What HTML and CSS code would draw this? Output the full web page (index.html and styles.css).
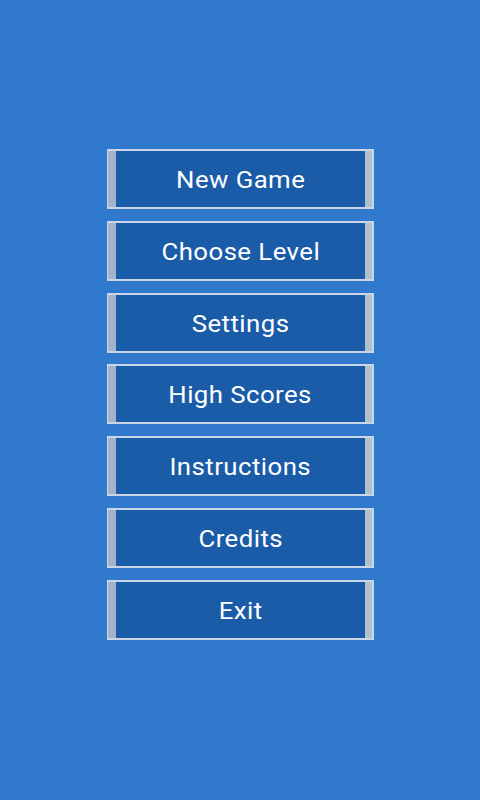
FILE: index.html
```html
<!DOCTYPE html>
<html lang="en">
<head>
    <meta charset="UTF-8">
    <meta name="viewport" content="width=device-width, initial-scale=1.0">
    <title>Main Menu</title>
    <link rel="stylesheet" href="styles.css">
</head>
<body>
    <div class="menu">
        <button class="menu-btn"><span class="label">New Game</span></button>
        <button class="menu-btn"><span class="label">Choose Level</span></button>
        <button class="menu-btn"><span class="label">Settings</span></button>
        <button class="menu-btn"><span class="label">High Scores</span></button>
        <button class="menu-btn"><span class="label">Instructions</span></button>
        <button class="menu-btn"><span class="label">Credits</span></button>
        <button class="menu-btn"><span class="label">Exit</span></button>
    </div>
</body>
</html>
```
FILE: styles.css
```css
/* General Styles */
body {
    font-family: Roboto, 'Open Sans', sans-serif;
    background-color: #3079cc;
    margin: 0;
    width: 480px;
    height: 800px;
    display: flex;
    justify-content: center;
    padding-top: 149px;
    box-sizing: border-box;
}

/* Menu */
.menu {
    display: flex;
    flex-direction: column;
    gap: 11.8px;
    width: 267px;
}

.menu-btn {
    display: flex;
    align-items: center;
    justify-content: center;
    height: 60px;
    padding: 3px 0 0 2px;
    margin: 0;
    border: 2px solid #c9d6e8;
    border-left-width: 1px;
    background: #1a5ca7;
    box-shadow: inset 8px 0 #a3b4ca, inset -7px 0 #b0bfd2;
    cursor: pointer;
    font-family: inherit;
}

.label {
    display: inline-block;
    color: #ffffff;
    font-size: 23px;
    letter-spacing: 0.4px;
    transform: scaleX(1.12);
}
```
